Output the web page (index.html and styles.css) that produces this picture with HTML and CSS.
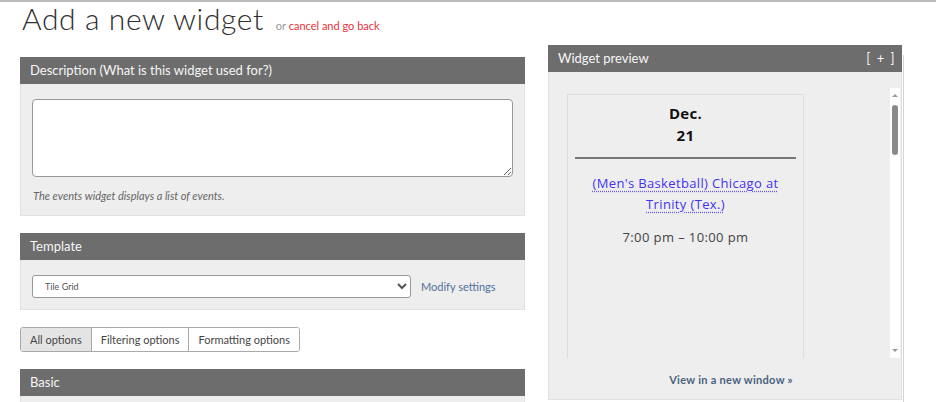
FILE: index.html
```html
<!DOCTYPE html>
<html lang="en">
<head>
    <meta charset="UTF-8" />
    <meta name="viewport" content="width=device-width, initial-scale=1.0"/>
    <title>Add a new widget</title>
    <link rel="stylesheet" href="styles.css">
</head>
<body>
    <div class="page">
        <div class="title-row">
            <h1>Add a new widget</h1>
            <span class="title-note">or <a href="#">cancel and go back</a></span>
        </div>

        <div class="layout">
            <div class="form-col">
                <div class="panel">
                    <div class="panel-head">Description (What is this widget used for?)</div>
                    <div class="panel-body desc-body">
                        <textarea class="desc-input"></textarea>
                        <div class="help">The events widget displays a list of events.</div>
                    </div>
                </div>

                <div class="panel">
                    <div class="panel-head">Template</div>
                    <div class="panel-body template-body">
                        <select class="template-select">
                            <option>Tile Grid</option>
                        </select>
                        <a class="modify" href="#">Modify settings</a>
                    </div>
                </div>

                <div class="tabs">
                    <button class="tab active">All options</button>
                    <button class="tab">Filtering options</button>
                    <button class="tab">Formatting options</button>
                </div>

                <div class="panel">
                    <div class="panel-head">Basic</div>
                    <div class="panel-body basic-body"></div>
                </div>
            </div>

            <div class="preview-col">
                <div class="panel-head preview-head">
                    <span>Widget preview</span>
                    <span class="expand">[ + ]</span>
                </div>
                <div class="preview-body">
                    <div class="frame">
                        <div class="frame-content">
                            <div class="tile">
                                <div class="tile-date">Dec.<br>21</div>
                                <hr class="tile-rule">
                                <a class="tile-title" href="#">(Men's Basketball) Chicago at Trinity (Tex.)</a>
                                <div class="tile-time">7:00 pm – 10:00 pm</div>
                            </div>
                        </div>
                        <div class="scrollbar">
                            <span class="arrow up"></span>
                            <span class="thumb"></span>
                            <span class="track"></span>
                            <span class="arrow down"></span>
                        </div>
                    </div>
                    <a class="new-window" href="#">View in a new window »</a>
                </div>
            </div>
        </div>
    </div>
</body>
</html>
```

FILE: styles.css
```css
body {
    margin: 0;
    border-top: 2px solid #bbbbbb;
    font-family: Lato, "Open Sans", sans-serif;
    color: #333;
    background-color: #ffffff;
    overflow: hidden;
}
a {
    text-decoration: none;
}
.page {
    padding: 0 20px;
}
.title-row {
    display: flex;
    align-items: baseline;
    height: 32px;
    padding-left: 2px;
}
h1 {
    margin: 0;
    font-size: 30px;
    line-height: 32px;
    font-weight: 300;
    letter-spacing: 0.6px;
    color: #2e2e2e;
}
.title-note {
    margin-left: 12px;
    font-size: 11px;
    color: #999;
}
.title-note a {
    color: #e8303a;
}
.layout {
    display: flex;
    align-items: flex-start;
    gap: 23px;
    margin-top: 11px;
}
.form-col {
    width: 505px;
    padding-top: 12px;
    display: flex;
    flex-direction: column;
    gap: 17px;
}
.panel-head {
    height: 27px;
    line-height: 27px;
    padding: 0 10px;
    background-color: #6d6d6d;
    color: #f6f6f6;
    font-size: 13px;
}
.panel-body {
    background-color: #eeeeee;
    border: 1px solid #e2e2e2;
    border-top: none;
}
.desc-body {
    padding: 15px 11px 0 11px;
    height: 116px;
}
.desc-input {
    display: block;
    box-sizing: border-box;
    width: 481px;
    height: 78px;
    border: 1px solid #999;
    border-radius: 4px;
    background: #fff;
    resize: vertical;
}
.help {
    margin-top: 12px;
    font-size: 11px;
    font-style: italic;
    color: #666;
    padding-left: 1px;
}
.template-body {
    display: flex;
    align-items: center;
    gap: 10px;
    box-sizing: border-box;
    height: 50px;
    padding: 15px 11px 12px 11px;
}
.template-select {
    width: 379px;
    height: 23px;
    border: 1px solid #999;
    border-radius: 3px;
    background: #fff;
    font-family: Lato, sans-serif;
    font-size: 9px;
    color: #555;
    padding-left: 8px;
}
.modify {
    font-size: 11px;
    color: #50709a;
}
.tabs {
    display: flex;
    align-self: flex-start;
    border: 1px solid #aaa;
    border-radius: 3px;
    overflow: hidden;
}
.tab {
    height: 23px;
    padding: 0 9px;
    border: none;
    border-left: 1px solid #aaa;
    background: #fff;
    font-family: Lato, sans-serif;
    font-size: 11px;
    color: #444;
}
.tab:first-child {
    border-left: none;
}
.tab.active {
    background: #e4e4e4;
}
.basic-body {
    height: 10px;
}
.preview-col {
    width: 354px;
    position: relative;
}
.preview-col::after {
    content: "";
    position: absolute;
    right: -2px;
    top: 10px;
    bottom: -20px;
    width: 1px;
    background: #d4d4d4;
}
.preview-head {
    display: flex;
    justify-content: space-between;
    padding: 0 6px 0 10px;
}
.expand {
    letter-spacing: 1.5px;
}
.preview-body {
    background-color: #eeeeee;
    border: 1px solid #e0e0e0;
    border-top: none;
    padding: 16px 0 0 18px;
    height: 311px;
}
.frame {
    display: flex;
    height: 270px;
}
.frame-content {
    flex: 1;
    padding-top: 6px;
    overflow: hidden;
}
.tile {
    box-sizing: border-box;
    width: 237px;
    height: 264px;
    border: 1px solid #dedede;
    border-bottom: none;
    text-align: center;
    padding: 7px 7px 0 7px;
    font-family: "Open Sans", sans-serif;
}
.tile-date {
    font-size: 15px;
    line-height: 22px;
    font-weight: 700;
    color: #111;
    letter-spacing: 0.3px;
}
.tile-rule {
    margin: 11px 0 0 0;
    border: none;
    border-top: 2px solid #777;
}
.tile-title {
    display: inline-block;
    margin-top: 14px;
    padding: 0 12px;
    font-size: 13px;
    line-height: 21px;
    letter-spacing: 0.35px;
    color: #4433ee;
    text-decoration: underline dotted #6655ff;
    text-underline-offset: 3px;
}
.tile-time {
    margin-top: 13px;
    font-size: 13px;
    letter-spacing: 0.4px;
    color: #444;
}
.scrollbar {
    width: 10px;
    margin-right: 1px;
    background: #fff;
    display: flex;
    flex-direction: column;
    align-items: center;
}
.arrow {
    width: 0;
    height: 0;
    border-left: 3px solid transparent;
    border-right: 3px solid transparent;
}
.arrow.up {
    margin-top: 6px;
    border-bottom: 3px solid #999;
}
.arrow.down {
    margin-bottom: 6px;
    border-top: 3px solid #999;
}
.thumb {
    margin-top: 8px;
    width: 6px;
    height: 50px;
    border-radius: 3px;
    background: #8a8a8a;
}
.track {
    flex: 1;
}
.new-window {
    display: block;
    text-align: center;
    margin-top: 15px;
    padding-right: 6px;
    font-size: 11px;
    font-weight: 700;
    letter-spacing: 0.3px;
    color: #4a6280;
}
```
